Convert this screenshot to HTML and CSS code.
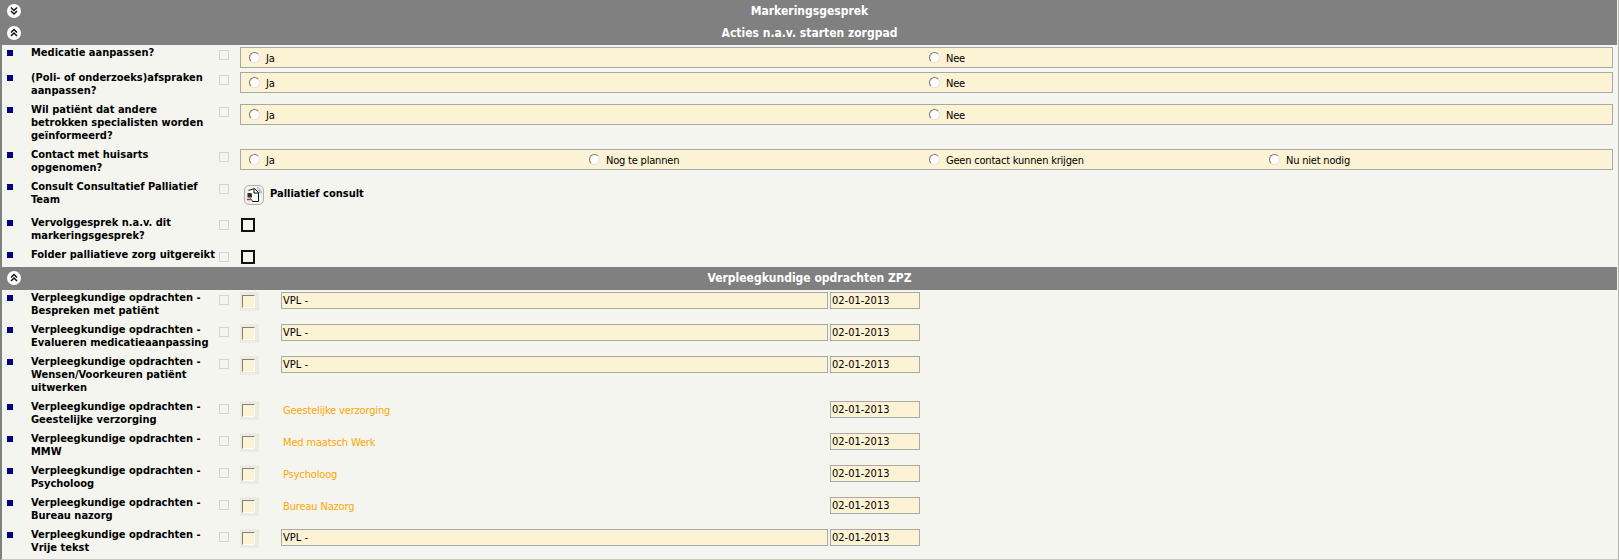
FILE: index.html
```html
<!DOCTYPE html>
<html lang="nl">
<head>
<meta charset="utf-8">
<title>Markeringsgesprek</title>
<link rel="stylesheet" href="styles.css">
</head>
<body>
<div class="page">
  <div class="bar bar-first"><svg class="toggle" viewBox="0 0 14 14"><circle cx="7" cy="7" r="7" fill="#fff"/><path d="M4 3.5 7 6.5 10 3.5M4 7 7 10 10 7" fill="none" stroke="#111" stroke-width="1.5"/></svg><span>Markeringsgesprek</span></div>
  <div class="bar"><svg class="toggle" viewBox="0 0 14 14"><circle cx="7" cy="7" r="7" fill="#fff"/><path d="M4 6.5 7 3.5 10 6.5M4 10 7 7 10 10" fill="none" stroke="#111" stroke-width="1.5"/></svg><span>Acties n.a.v. starten zorgpad</span></div>

  <div class="row r25"><i class="bullet"></i><div class="label">Medicatie aanpassen?</div><i class="mark"></i>
    <div class="choices two"><label><i class="radio"></i>Ja</label><label><i class="radio"></i>Nee</label></div></div>
  <div class="row"><i class="bullet"></i><div class="label">(Poli- of onderzoeks)afspraken aanpassen?</div><i class="mark"></i>
    <div class="choices two"><label><i class="radio"></i>Ja</label><label><i class="radio"></i>Nee</label></div></div>
  <div class="row"><i class="bullet"></i><div class="label">Wil patiënt dat andere betrokken specialisten worden geïnformeerd?</div><i class="mark"></i>
    <div class="choices two"><label><i class="radio"></i>Ja</label><label><i class="radio"></i>Nee</label></div></div>
  <div class="row"><i class="bullet"></i><div class="label">Contact met huisarts opgenomen?</div><i class="mark"></i>
    <div class="choices four"><label><i class="radio"></i>Ja</label><label><i class="radio"></i>Nog te plannen</label><label><i class="radio"></i>Geen contact kunnen krijgen</label><label><i class="radio"></i>Nu niet nodig</label></div></div>
  <div class="row r36"><i class="bullet"></i><div class="label">Consult Consultatief Palliatief Team</div><i class="mark"></i>
    <div class="consult"><svg class="doc" viewBox="0 0 20 20"><rect x=".5" y=".5" width="19" height="19" rx="4.500" fill="#f1f2ee" stroke="#aab3ae"/><path d="M13 2.500c2.500.5 4 2.500 4.500 6M14 5c1 .5 1.500 1.500 1.500 3" fill="none" stroke="#9a9a9a"/><path d="M4.500 5.500 10.500 3.500 14.500 7.500V16.500H8.500L6.500 13.500" fill="#fff" stroke="#111"/><path d="M10 4V8H14.500" fill="none" stroke="#111"/><path d="M3.500 8h3.500l1 1v3.500H3.500z" fill="#333"/><path d="M3 14.500h3.500" stroke="#d22" stroke-width="1.500"/><path d="M7 15.500h2" stroke="#7a7" stroke-width="1"/></svg><b class="consult-text">Palliatief consult</b></div></div>
  <div class="row"><i class="bullet"></i><div class="label">Vervolggesprek n.a.v. dit markeringsgesprek?</div><i class="mark"></i><i class="check"></i></div>
  <div class="row r20"><i class="bullet"></i><div class="label">Folder palliatieve zorg uitgereikt</div><i class="mark"></i><i class="check"></i></div>

  <div class="bar"><svg class="toggle" viewBox="0 0 14 14"><circle cx="7" cy="7" r="7" fill="#fff"/><path d="M4 6.5 7 3.5 10 6.5M4 10 7 7 10 10" fill="none" stroke="#111" stroke-width="1.5"/></svg><span>Verpleegkundige opdrachten ZPZ</span></div>

  <div class="row"><i class="bullet"></i><div class="label">Verpleegkundige opdrachten - Bespreken met patiënt</div><i class="mark"></i><div class="cell"><i class="sunken"></i></div><div class="field">VPL -</div><div class="date">02-01-2013</div></div>
  <div class="row"><i class="bullet"></i><div class="label">Verpleegkundige opdrachten - Evalueren medicatieaanpassing</div><i class="mark"></i><div class="cell"><i class="sunken"></i></div><div class="field">VPL -</div><div class="date">02-01-2013</div></div>
  <div class="row"><i class="bullet"></i><div class="label">Verpleegkundige opdrachten - Wensen/Voorkeuren patiënt uitwerken</div><i class="mark"></i><div class="cell"><i class="sunken"></i></div><div class="field">VPL -</div><div class="date">02-01-2013</div></div>
  <div class="row"><i class="bullet"></i><div class="label">Verpleegkundige opdrachten - Geestelijke verzorging</div><i class="mark"></i><div class="cell"><i class="sunken"></i></div><div class="task">Geestelijke verzorging</div><div class="date">02-01-2013</div></div>
  <div class="row"><i class="bullet"></i><div class="label">Verpleegkundige opdrachten - MMW</div><i class="mark"></i><div class="cell"><i class="sunken"></i></div><div class="task">Med maatsch Werk</div><div class="date">02-01-2013</div></div>
  <div class="row"><i class="bullet"></i><div class="label">Verpleegkundige opdrachten - Psycholoog</div><i class="mark"></i><div class="cell"><i class="sunken"></i></div><div class="task">Psycholoog</div><div class="date">02-01-2013</div></div>
  <div class="row"><i class="bullet"></i><div class="label">Verpleegkundige opdrachten - Bureau nazorg</div><i class="mark"></i><div class="cell"><i class="sunken"></i></div><div class="task">Bureau Nazorg</div><div class="date">02-01-2013</div></div>
  <div class="row"><i class="bullet"></i><div class="label">Verpleegkundige opdrachten - Vrije tekst</div><i class="mark"></i><div class="cell"><i class="sunken"></i></div><div class="field">VPL -</div><div class="date">02-01-2013</div></div>
</div>
</body>
</html>
```
FILE: styles.css
```css
html, body { margin: 0; padding: 0; }
body {
  background: #f5f5ef;
  color: #000;
  font: 11px/13px "DejaVu Sans Condensed", "DejaVu Sans", sans-serif;
}
.page {
  box-sizing: border-box;
  width: 1619px;
  height: 560px;
  overflow: hidden;
  border-left: 2px solid #808080;
  border-right: 1px solid #b5b5b0;
  border-bottom: 1px solid #c8c8c4;
}
.bar {
  display: flex;
  align-items: center;
  justify-content: center;
  position: relative;
  width: 1615px;
  height: 23px;
  background: #808080;
  color: #fff;
  font-size: 12px;
  font-weight: bold;
}
.bar-first { height: 22px; }
.toggle {
  position: absolute;
  left: 5px;
  top: 4px;
  width: 14px;
  height: 14px;
}
.row {
  display: flex;
  align-items: flex-start;
  min-height: 32px;
}
.r25 { min-height: 25px; }
.r36 { min-height: 36px; }
.r20 { min-height: 20px; }
.bullet {
  flex: none;
  width: 6px;
  height: 6px;
  margin: 5px 18px 0 5px;
  background: #000080;
}
.label {
  flex: none;
  box-sizing: border-box;
  width: 185px;
  margin-right: 3px;
  padding: 1px 0 5px;
  font-weight: bold;
  color: #000;
}
.r25 .label, .r20 .label { padding-bottom: 0; }
.mark {
  flex: none;
  box-sizing: border-box;
  width: 10px;
  height: 10px;
  margin: 5px 11px 0 0;
  border: 1px solid #d5d5d0;
}
.choices {
  flex: none;
  box-sizing: border-box;
  display: grid;
  width: 1373px;
  height: 21px;
  margin-top: 2px;
  padding: 3px 0 0 8px;
  background: #fcf2d4;
  border: 1px solid #a9a9a9;
  grid-auto-flow: column;
}
.two { grid-template-columns: 680px 680px; }
.four { grid-template-columns: 340px 340px 340px 340px; }
.choices label {
  display: flex;
  align-items: flex-start;
  line-height: 15px;
  letter-spacing: -0.2px;
}
.radio {
  flex: none;
  box-sizing: border-box;
  width: 11px;
  height: 11px;
  margin: 1px 6px 0 0;
  background: #fff;
  border: 1px solid #777;
  border-right-color: #e4e4e0;
  border-bottom-color: #e4e4e0;
  border-radius: 50%;
}
.consult {
  display: flex;
  align-items: flex-start;
  gap: 6px;
  margin: 6px 0 0 4px;
}
.consult-text { padding-top: 2px; }
.doc { width: 20px; height: 20px; flex: none; }
.check {
  flex: none;
  box-sizing: border-box;
  width: 14px;
  height: 14px;
  margin: 3px 0 0 1px;
  background: #f5f5ef;
  border: 2px solid #111;
}
.cell {
  flex: none;
  box-sizing: border-box;
  width: 19px;
  height: 19px;
  margin: 2px 22px 0 0;
  padding: 3px 0 0 2px;
  background: #ecebdf;
}
.sunken {
  display: block;
  box-sizing: border-box;
  width: 13px;
  height: 13px;
  background: #fcf2d4;
  border: 1px solid #fff;
  border-top-color: #808080;
  border-left-color: #808080;
}
.field, .date {
  flex: none;
  box-sizing: border-box;
  height: 17px;
  margin-top: 2px;
  padding-left: 1px;
  line-height: 15px;
  background: #fcf2d4;
  border: 1px solid #a9a9a9;
}
.field { width: 547px; margin-right: 2px; }
.date { width: 90px; }
.task {
  flex: none;
  width: 549px;
  padding: 5px 0 0 2px;
  box-sizing: border-box;
  color: #ffa500;
  letter-spacing: -0.15px;
}
```
